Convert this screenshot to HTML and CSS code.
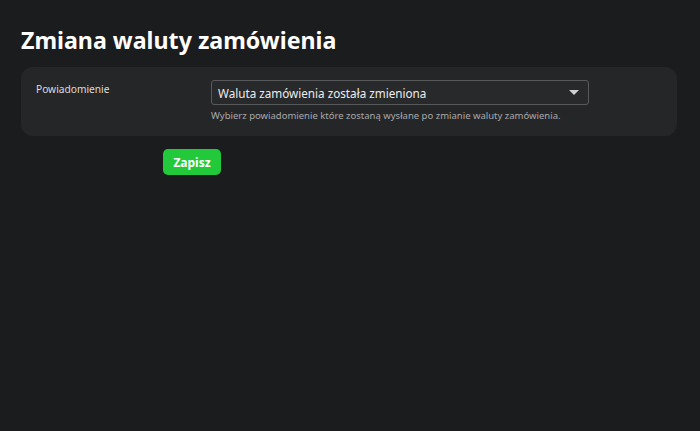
FILE: index.html
```html
<!DOCTYPE html>
<html lang="pl">
<head>
<meta charset="utf-8">
<link rel="stylesheet" href="styles.css">
</head>
<body>
<main class="page">
  <h1 class="title">Zmiana waluty zamówienia</h1>
  <section class="card">
    <div class="row">
      <label class="label">Powiadomienie</label>
      <div class="field">
        <div class="select">
          <span class="select-text">Waluta zamówienia została zmieniona</span>
          <span class="caret"></span>
        </div>
        <p class="help">Wybierz powiadomienie które zostaną wysłane po zmianie waluty zamówienia.</p>
      </div>
    </div>
  </section>
  <div class="actions">
    <button class="btn">Zapisz</button>
  </div>
</main>
</body>
</html>
```
FILE: styles.css
```css
html, body {
  margin: 0;
  background: #1b1c1e;
  height: 100%;
}
body {
  font-family: "Noto Sans", "Open Sans", sans-serif;
  color: #e6e6e6;
}
.page {
  padding: 24px 23px 0 21px;
}
.title {
  margin: 0 0 11px;
  font-size: 23.2px;
  line-height: 32px;
  font-weight: 700;
  color: #ffffff;
}
.card {
  background: #252628;
  border-radius: 12px;
  padding: 13px 15px 13px;
}
.row {
  display: flex;
}
.label {
  width: 175px;
  font-size: 10.2px;
  line-height: 18px;
  color: #dcdcdc;
  padding-top: 0;
}
.field {
  width: 378px;
}
.select {
  box-sizing: border-box;
  height: 25px;
  border: 1px solid #58595b;
  border-radius: 3px;
  background: #28292b;
  display: flex;
  align-items: center;
  justify-content: space-between;
  padding: 0 9px 0 6px;
}
.select-text {
  font-size: 11.7px;
  color: #ececee;
}
.caret {
  width: 0;
  height: 0;
  border-left: 5px solid transparent;
  border-right: 5px solid transparent;
  border-top: 5px solid #cfd0d4;
}
.help {
  margin: 4px 0 0;
  font-size: 9.5px;
  line-height: 14px;
  color: #a8a9ac;
}
.actions {
  padding: 13px 0 0 142px;
}
.btn {
  width: 58px;
  height: 26px;
  border: none;
  border-radius: 5px;
  background: #22c93a;
  color: #ffffff;
  font-family: "Noto Sans", "Open Sans", sans-serif;
  font-weight: 700;
  font-size: 12px;
  padding: 0;
}
```
